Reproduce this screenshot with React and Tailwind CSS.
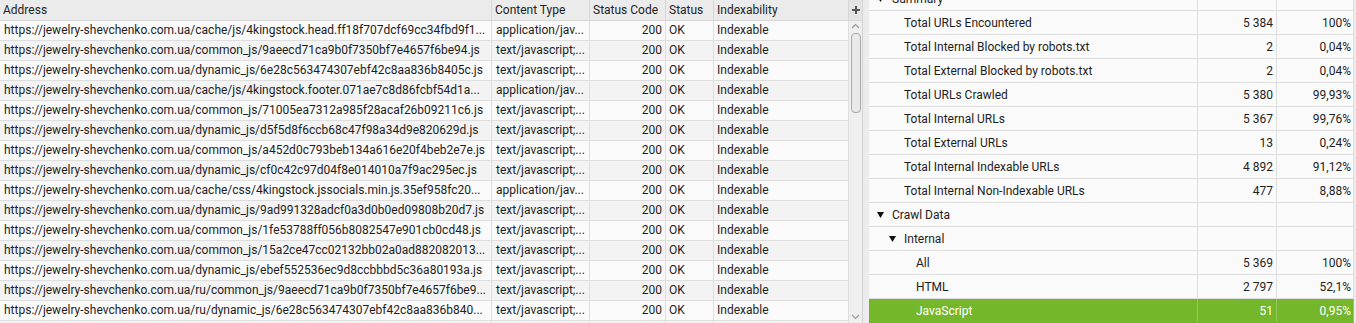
import React from "react";

const base = "https://jewelry-shevchenko.com.ua/";
const APP = "application/jav...";
const TXT = "text/javascript;...";

const leftRows = [
  ["cache/js/4kingstock.head.ff18f707dcf69cc34fbd9f1...", APP],
  ["common_js/9aeecd71ca9b0f7350bf7e4657f6be94.js", TXT],
  ["dynamic_js/6e28c563474307ebf42c8aa836b8405c.js", TXT],
  ["cache/js/4kingstock.footer.071ae7c8d86fcbf54d1a...", APP],
  ["common_js/71005ea7312a985f28acaf26b09211c6.js", TXT],
  ["dynamic_js/d5f5d8f6ccb68c47f98a34d9e820629d.js", TXT],
  ["common_js/a452d0c793beb134a616e20f4beb2e7e.js", TXT],
  ["dynamic_js/cf0c42c97d04f8e014010a7f9ac295ec.js", TXT],
  ["cache/css/4kingstock.jssocials.min.js.35ef958fc20...", APP],
  ["dynamic_js/9ad991328adcf0a3d0b0ed09808b20d7.js", TXT],
  ["common_js/1fe53788ff056b8082547e901cb0cd48.js", TXT],
  ["common_js/15a2ce47cc02132bb02a0ad882082013...", TXT],
  ["dynamic_js/ebef552536ec9d8ccbbbd5c36a80193a.js", TXT],
  ["ru/common_js/9aeecd71ca9b0f7350bf7e4657f6be9...", TXT],
  ["ru/dynamic_js/6e28c563474307ebf42c8aa836b840...", TXT],
  null,
];

const rightRows = [
  { label: "Summary", level: 0, tri: true },
  { label: "Total URLs Encountered", level: 1, n: "5 384", p: "100%" },
  { label: "Total Internal Blocked by robots.txt", level: 1, n: "2", p: "0,04%" },
  { label: "Total External Blocked by robots.txt", level: 1, n: "2", p: "0,04%" },
  { label: "Total URLs Crawled", level: 1, n: "5 380", p: "99,93%" },
  { label: "Total Internal URLs", level: 1, n: "5 367", p: "99,76%" },
  { label: "Total External URLs", level: 1, n: "13", p: "0,24%" },
  { label: "Total Internal Indexable URLs", level: 1, n: "4 892", p: "91,12%" },
  { label: "Total Internal Non-Indexable URLs", level: 1, n: "477", p: "8,88%" },
  { label: "Crawl Data", level: 0, tri: true },
  { label: "Internal", level: 1, tri: true },
  { label: "All", level: 2, n: "5 369", p: "100%" },
  { label: "HTML", level: 2, n: "2 797", p: "52,1%" },
  { label: "JavaScript", level: 2, n: "51", p: "0,95%", sel: true },
];

function Tri() {
  return (
    <svg width="7" height="6" viewBox="0 0 7 6" className="shrink-0">
      <path d="M0 0 H7 L3.5 6 Z" fill="#111" />
    </svg>
  );
}

const indent = ["pl-[8px]", "pl-[20px]", "pl-[32px]"];
const leafIndent = ["pl-[23px]", "pl-[35px]", "pl-[47px]"];

export default function App() {
  return (
    <div
      className="flex w-[1356px] h-[323px] overflow-hidden bg-[#ececec] text-[12px] text-[#1e1e1e]"
      style={{ fontFamily: "Roboto, 'Liberation Sans', sans-serif" }}
    >
      {/* Left table */}
      <div className="flex flex-col w-[863px] shrink-0 border-r border-[#d2d2d2]">
        <div className="flex h-[21px] shrink-0 bg-[#ebebeb] border-b border-[#d6d6d6] leading-[20px]">
          <div className="w-[492px] shrink-0 border-r border-[#d6d6d6] pl-[3px]">Address</div>
          <div className="w-[98px] shrink-0 border-r border-[#d6d6d6] pl-[3px]">Content Type</div>
          <div className="w-[76px] shrink-0 border-r border-[#d6d6d6] pl-[3px]">Status Code</div>
          <div className="w-[48px] shrink-0 border-r border-[#d6d6d6] pl-[3px]">Status</div>
          <div className="w-[135px] shrink-0 border-r border-[#d6d6d6] pl-[3px]">Indexability</div>
          <div className="w-[13px] shrink-0 flex items-center justify-center bg-[#e4e4e4]">
            <svg width="8" height="8" viewBox="0 0 8 8">
              <path d="M3 0 H5 V3 H8 V5 H5 V8 H3 V5 H0 V3 H3 Z" fill="#555" />
            </svg>
          </div>
        </div>
        <div className="flex flex-1 min-h-0">
          <div className="flex flex-col w-[849px] shrink-0 overflow-hidden">
            {leftRows.map((row, i) => (
              <div
                key={i}
                className={`flex h-[20px] shrink-0 border-b border-[#dedede] leading-[19px] ${
                  i % 2 === 0 ? "bg-[#fafafa]" : "bg-[#f3f3f3]"
                }`}
              >
                <div className="w-[492px] shrink-0 border-r border-[#dedede] pl-[4px] pr-[2px] whitespace-nowrap overflow-hidden text-ellipsis">
                  {row ? base + row[0] : ""}
                </div>
                <div className="w-[98px] shrink-0 border-r border-[#dedede] pl-[4px] whitespace-nowrap overflow-hidden text-ellipsis">
                  {row ? row[1] : ""}
                </div>
                <div className="w-[76px] shrink-0 border-r border-[#dedede] pr-[3px] text-right">{row ? "200" : ""}</div>
                <div className="w-[48px] shrink-0 border-r border-[#dedede] pl-[3px]">{row ? "OK" : ""}</div>
                <div className="w-[135px] shrink-0 border-r border-[#dedede] pl-[3px]">{row ? "Indexable" : ""}</div>
              </div>
            ))}
          </div>
          {/* scrollbar */}
          <div className="w-[13px] shrink-0 bg-[#efefef] flex flex-col items-center">
            <svg width="9" height="6" viewBox="0 0 9 6" className="mt-[2px]">
              <path d="M1 5 L4.5 1.5 L8 5" stroke="#9a9a9a" strokeWidth="1.2" fill="none" />
            </svg>
            <div className="mt-[4px] w-[10px] h-[80px] rounded-[4px] border border-[#a9a9a9] bg-[#e9e9e9]" />
            <div className="flex-1" />
            <svg width="9" height="6" viewBox="0 0 9 6" className="mb-[3px]">
              <path d="M1 1 L4.5 4.5 L8 1" stroke="#9a9a9a" strokeWidth="1.2" fill="none" />
            </svg>
          </div>
        </div>
      </div>

      {/* splitter */}
      <div className="w-[6px] shrink-0 bg-[#ececec]" />

      {/* Right panel */}
      <div className="flex-1 overflow-hidden">
        <div className="mt-[-13px] flex flex-col w-[485px]">
          {rightRows.map((r, i) => (
            <div
              key={i}
              className={`flex h-[24px] shrink-0 leading-[23px] border-b ${
                r.sel
                  ? "bg-[#75b72b] text-white border-[#75b72b]"
                  : "bg-[#fafafa] border-[#dedede]"
              }`}
            >
              <div
                className={`w-[329px] shrink-0 border-r flex items-start pt-[1px] ${
                  r.sel ? "border-[#93c85a]" : "border-[#dedede]"
                } ${r.tri ? indent[r.level] : leafIndent[r.level]}`}
              >
                {r.tri && (
                  <span className="mt-[8px]">
                    <Tri />
                  </span>
                )}
                <span className={r.tri ? "ml-[8px]" : ""}>{r.label}</span>
              </div>
              <div
                className={`w-[79px] shrink-0 border-r text-right pr-[3px] pt-[1px] ${
                  r.sel ? "border-[#93c85a]" : "border-[#dedede]"
                }`}
              >
                {r.n}
              </div>
              <div
                className={`w-[77px] shrink-0 border-r text-right pr-[2px] pt-[1px] ${
                  r.sel ? "border-[#93c85a]" : "border-[#dedede]"
                }`}
              >
                {r.p}
              </div>
            </div>
          ))}
        </div>
      </div>
    </div>
  );
}
